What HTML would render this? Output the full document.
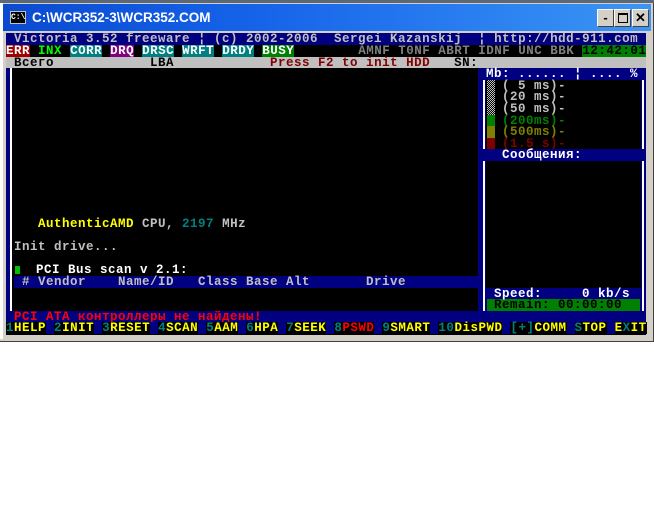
<!DOCTYPE html>
<html><head><meta charset="utf-8"><style>
*{margin:0;padding:0;box-sizing:border-box}
body{width:654px;height:512px;background:#fff;position:relative;overflow:hidden;font-family:"Liberation Mono",monospace;font-weight:bold}
.a{position:absolute}
.r{position:absolute;left:6px;height:11.6px;white-space:pre;font-size:12.5px;letter-spacing:0.5px;line-height:12.4px;color:#c0c0c0}
.r span{display:inline-block;height:11.6px;vertical-align:top;line-height:12.4px}
.btn{position:absolute;top:9px;width:17px;height:18px;background:#d4d0c8;border:1px solid;border-color:#fff #404040 #404040 #fff;font-family:"Liberation Sans",sans-serif;font-size:13px;text-align:center;line-height:16px;color:#000;letter-spacing:0}
</style></head><body>
<div class="a" style="left:0;top:0;width:654px;height:4px;background:#5a6878"></div>
<div class="a" style="left:0;top:3px;width:654px;height:339px;background:#d4d0c8;border-right:1px solid #404040;border-bottom:1px solid #404040"></div>
<div class="a" style="left:0;top:3px;width:3px;height:336px;background:#fff"></div>
<div class="a" style="left:3px;top:4px;width:648px;height:27px;background:linear-gradient(90deg,#0a4ad0,#1664ea 40%,#3b95f5)"></div>
<div class="a" style="left:10px;top:11px;width:16px;height:13px;background:#000;border:1px solid #c0c0c0;color:#fff;font-family:'Liberation Mono',monospace;font-size:8px;line-height:11px;text-align:center">C:\</div>
<div class="a" style="left:32px;top:9px;color:#fff;font-family:'Liberation Sans',sans-serif;font-weight:bold;font-size:13.5px;line-height:18px">C:\WCR352-3\WCR352.COM</div>
<div class="btn" style="left:597px">&#8209;</div>
<div class="btn" style="left:614px"><div style="position:absolute;left:3px;top:3px;width:10px;height:10px;border:1px solid #000;border-top-width:2px"></div></div>
<div class="btn" style="left:632px;font-weight:bold">✕</div>
<div class="a" style="left:6px;top:33px;width:640px;height:302px;background:#000"></div>
<div class="a" style="left:6px;top:68px;width:4px;height:244px;background:#000080"></div>
<div class="a" style="left:10px;top:68px;width:2px;height:244px;background:#fff"></div>
<div class="a" style="left:478px;top:68px;width:168px;height:244px;background:#000080"></div>
<div class="a" style="left:486px;top:80px;width:155px;height:70px;background:#000"></div>
<div class="a" style="left:486px;top:161px;width:155px;height:127px;background:#000"></div>
<div class="a" style="left:483px;top:80px;width:2px;height:70px;background:#fff"></div>
<div class="a" style="left:642px;top:80px;width:2px;height:70px;background:#fff"></div>
<div class="a" style="left:483px;top:161px;width:2px;height:151px;background:#fff"></div>
<div class="a" style="left:642px;top:161px;width:2px;height:151px;background:#fff"></div>
<div class="a" style="left:487px;top:299px;width:153px;height:12px;background:#008000"></div>
<div class="a" style="left:487px;top:80px;width:8px;height:35px;background:repeating-conic-gradient(#c0c0c0 0 25%,#000 0 50%) 0 0/2px 2px"></div>
<div class="a" style="left:487px;top:115px;width:8px;height:12px;background:#008000"></div>
<div class="a" style="left:487px;top:126px;width:8px;height:12px;background:#808000"></div>
<div class="a" style="left:487px;top:138px;width:8px;height:12px;background:#800000"></div>

<div class="r" style="top:33.4px;background:#000080;width:640px"> Victoria 3.52 freeware ¦ (c) 2002-2006  Sergei Kazanskij  ¦ http://hdd-911.com </div>
<div class="r" style="top:45px"><span style="background:#a00000;color:#fff">ERR</span> <span style="color:#00ff00">INX</span> <span style="background:#008080;color:#fff">CORR</span> <span style="background:#800080;color:#fff">DRQ</span> <span style="background:#008080;color:#fff">DRSC</span> <span style="background:#008080;color:#fff">WRFT</span> <span style="background:#008080;color:#fff">DRDY</span> <span style="background:#008000;color:#fff">BUSY</span>        <span style="color:#808080">AMNF T0NF ABRT IDNF UNC BBK</span> <span style="background:#008000;color:#000">12:42:01</span></div>
<div class="r" style="top:56.6px;background:#c0c0c0;width:640px;color:#000"> Всего            LBA            <span style="color:#800000">Press F2 to init HDD</span>   SN:</div>
<div class="r" style="top:68.2px;left:486px;color:#fff">Mb: ...... ¦ .... %</div>
<div class="r" style="top:79.8px;left:502px">( 5 ms)-</div>
<div class="r" style="top:91.4px;left:502px">(20 ms)-</div>
<div class="r" style="top:103px;left:502px">(50 ms)-</div>
<div class="r" style="top:114.6px;left:502px;color:#008000">(200ms)-</div>
<div class="r" style="top:126.2px;left:502px;color:#808000">(500ms)-</div>
<div class="r" style="top:137.8px;left:502px;color:#800000">(1.5 s)-</div>
<div class="r" style="top:149.4px;left:478px;width:168px;background:#000080;color:#fff">   Сообщения:</div>
<div class="r" style="top:218px;color:#c0c0c0">    <span style="color:#ffff00">AuthenticAMD</span> CPU, <span style="color:#008080">2197</span> MHz</div>
<div class="r" style="top:241.2px"> Init drive...</div>
<div class="r" style="top:264.4px;color:#fff"> <span style="width:5px;background:#00c000;height:8px;margin-top:2px;margin-left:1px"></span>  PCI Bus scan v 2.1:</div>
<div class="r" style="top:276px;left:14px;width:464px;background:#000080"> # Vendor    Name/ID   Class Base Alt       Drive</div>
<div class="r" style="top:287.6px;left:494px;color:#fff">Speed:     0 kb/s</div>
<div class="r" style="top:299.2px;left:494px;color:#000">Remain: 00:00:00</div>
<div class="r" style="top:310.8px;width:640px;background:#000080;color:#ff0000"> PCI ATA контроллеры не найдены!</div>
<div class="r" style="top:322.4px;width:640px;background:#000080;color:#ffff00"><span style="background:#000"><span style="color:#008080">1</span>HELP</span> <span style="background:#000"><span style="color:#008080">2</span>INIT</span> <span style="background:#000"><span style="color:#008080">3</span>RESET</span> <span style="background:#000"><span style="color:#008080">4</span>SCAN</span> <span style="background:#000"><span style="color:#008080">5</span>AAM</span> <span style="background:#000"><span style="color:#008080">6</span>HPA</span> <span style="background:#000"><span style="color:#008080">7</span>SEEK</span> <span style="background:#000"><span style="color:#008080">8</span><span style="color:#ff0000">PSWD</span></span> <span style="background:#000"><span style="color:#008080">9</span>SMART</span> <span style="background:#000"><span style="color:#008080">10</span>DisPWD</span> <span style="background:#000"><span style="color:#008080">[+]</span>COMM</span> <span style="background:#000"><span style="color:#008080">S</span>TOP</span> <span style="background:#000">E<span style="color:#008080">X</span>IT</span></div>
</body></html>
